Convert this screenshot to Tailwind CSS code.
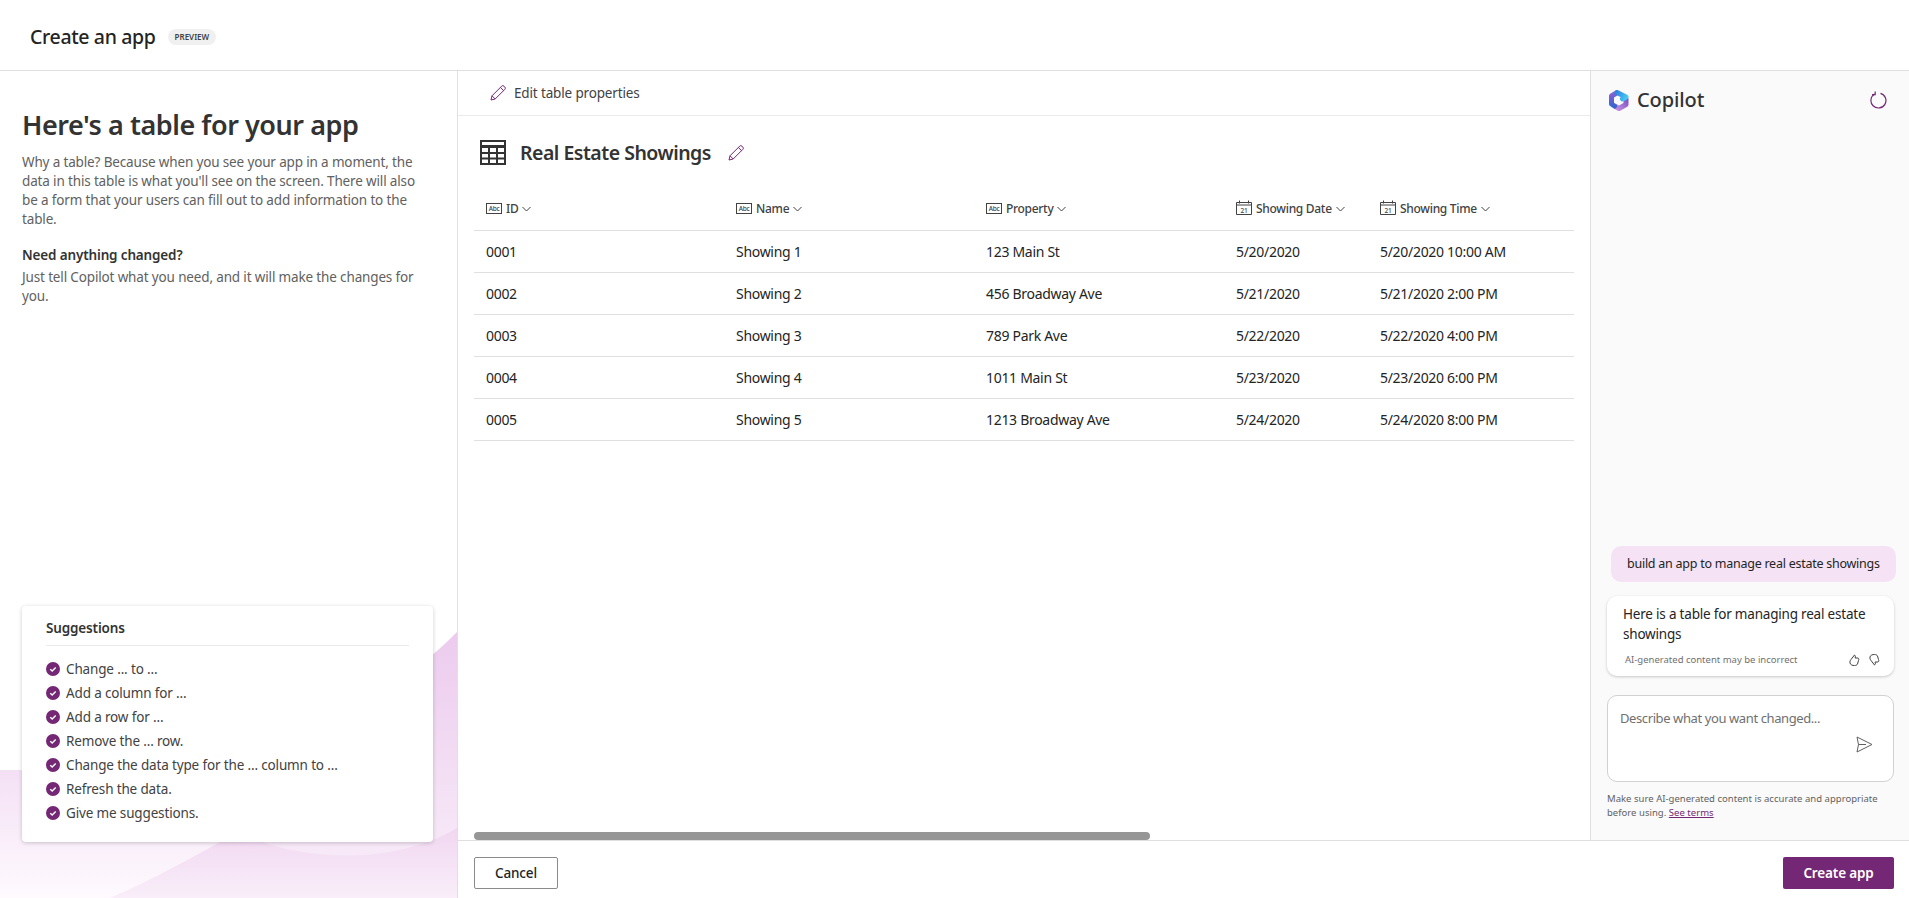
<!DOCTYPE html>
<html lang="en">
<head>
    <meta charset="UTF-8">
    <title>Create an app</title>
    <script src="https://cdn.jsdelivr.net/npm/@tailwindcss/browser@4"></script>
</head>
<body class="bg-white font-['Noto_Sans',sans-serif] text-[#242424] h-[898px] overflow-hidden">
    <!-- Header -->
    <header class="h-[71px] border-b border-[#e0e0e0] flex items-center pl-[30px] pt-[3px]">
        <h1 class="text-[19.5px] font-medium tracking-[-0.35px]">Create an app</h1>
        <span class="ml-[12px] h-[16px] px-[7px] rounded-full bg-[#f0f0f0] text-[8px] font-semibold text-[#424242] flex items-center">PREVIEW</span>
    </header>

    <div class="flex h-[827px]">
        <!-- Left panel -->
        <aside class="relative w-[458px] shrink-0 border-r border-[#e0e0e0] overflow-hidden">
            <svg class="absolute left-0 top-0" width="457" height="827" viewBox="0 71 457 827">
                <defs>
                    <linearGradient id="waveA" x1="0" y1="0" x2="0" y2="1">
                        <stop offset="0" stop-color="#eccbee"/>
                        <stop offset="1" stop-color="#f9eff9"/>
                    </linearGradient>
                    <linearGradient id="waveB" x1="0" y1="0" x2="0" y2="1">
                        <stop offset="0" stop-color="#f4e0f5"/>
                        <stop offset="1" stop-color="#fefafe"/>
                    </linearGradient>
                    <linearGradient id="waveC" x1="0" y1="0" x2="0" y2="1">
                        <stop offset="0" stop-color="#f1d7f1"/>
                        <stop offset="1" stop-color="#f9eef9"/>
                    </linearGradient>
                </defs>
                <path d="M0 770 H120 C250 770 380 710 457 632 V898 H0 Z" fill="url(#waveA)"/>
                <path d="M240 832 C290 860 390 868 457 828 V898 H110 Z" fill="url(#waveC)"/>
                <path d="M0 770 H40 C130 770 140 830 220 842 C170 870 140 885 110 898 H0 Z" fill="url(#waveB)"/>
            </svg>

            <div class="relative h-full flex flex-col justify-between pl-[22px] pr-[24px] pb-[56px]">
                <div>
                    <h2 class="mt-[36px] text-[27px] leading-[36px] font-semibold tracking-[-0.45px] text-[#333]">Here's a table for your app</h2>
                    <p class="mt-[10px] text-[13.5px] leading-[19px] text-[#616161] tracking-[-0.15px]">Why a table? Because when you see your app in a moment, the data in this table is what you'll see on the screen. There will also be a form that your users can fill out to add information to the table.</p>
                    <p class="mt-[17px] text-[13.5px] leading-[19px] font-semibold text-[#333] tracking-[-0.15px]">Need anything changed?</p>
                    <p class="mt-[3px] text-[13.5px] leading-[19px] text-[#616161] tracking-[-0.15px]">Just tell Copilot what you need, and it will make the changes for you.</p>
                </div>

                <!-- Suggestions -->
                <div class="w-[411px] h-[236px] bg-white rounded-[4px] shadow-[0_1px_4px_rgba(0,0,0,0.2)] px-[24px] pt-[12px]">
                    <div class="h-[28px] border-b border-[#ebebeb] text-[13.5px] font-semibold text-[#333] tracking-[-0.15px]">Suggestions</div>
                    <ul class="mt-[11px] text-[13.5px] leading-[24px] text-[#424242] tracking-[-0.15px]">
                        <li class="flex items-center gap-[6px] h-[24px]"><svg width="14" height="14" viewBox="0 0 14 14"><circle cx="7" cy="7" r="7" fill="#742774"/><path d="M4.3 7.2l1.9 1.8 3.5-3.6" fill="none" stroke="#fff" stroke-width="1.4"/></svg>Change ... to ...</li>
                        <li class="flex items-center gap-[6px] h-[24px]"><svg width="14" height="14" viewBox="0 0 14 14"><circle cx="7" cy="7" r="7" fill="#742774"/><path d="M4.3 7.2l1.9 1.8 3.5-3.6" fill="none" stroke="#fff" stroke-width="1.4"/></svg>Add a column for ...</li>
                        <li class="flex items-center gap-[6px] h-[24px]"><svg width="14" height="14" viewBox="0 0 14 14"><circle cx="7" cy="7" r="7" fill="#742774"/><path d="M4.3 7.2l1.9 1.8 3.5-3.6" fill="none" stroke="#fff" stroke-width="1.4"/></svg>Add a row for ...</li>
                        <li class="flex items-center gap-[6px] h-[24px]"><svg width="14" height="14" viewBox="0 0 14 14"><circle cx="7" cy="7" r="7" fill="#742774"/><path d="M4.3 7.2l1.9 1.8 3.5-3.6" fill="none" stroke="#fff" stroke-width="1.4"/></svg>Remove the ... row.</li>
                        <li class="flex items-center gap-[6px] h-[24px]"><svg width="14" height="14" viewBox="0 0 14 14"><circle cx="7" cy="7" r="7" fill="#742774"/><path d="M4.3 7.2l1.9 1.8 3.5-3.6" fill="none" stroke="#fff" stroke-width="1.4"/></svg>Change the data type for the ... column to ...</li>
                        <li class="flex items-center gap-[6px] h-[24px]"><svg width="14" height="14" viewBox="0 0 14 14"><circle cx="7" cy="7" r="7" fill="#742774"/><path d="M4.3 7.2l1.9 1.8 3.5-3.6" fill="none" stroke="#fff" stroke-width="1.4"/></svg>Refresh the data.</li>
                        <li class="flex items-center gap-[6px] h-[24px]"><svg width="14" height="14" viewBox="0 0 14 14"><circle cx="7" cy="7" r="7" fill="#742774"/><path d="M4.3 7.2l1.9 1.8 3.5-3.6" fill="none" stroke="#fff" stroke-width="1.4"/></svg>Give me suggestions.</li>
                    </ul>
                </div>
            </div>
        </aside>

        <!-- Center + right -->
        <div class="flex-1 flex flex-col min-w-0">
            <div class="flex h-[769px]">
                <main class="w-[1132px] shrink-0 flex flex-col">
                    <div class="h-[45px] border-b border-[#ebebeb] flex items-center pl-[32px] gap-[8px] text-[13.5px] text-[#424242] tracking-[-0.15px]">
                        <svg width="16" height="16" viewBox="0 0 16 16" fill="none" stroke="#742774" stroke-width="1"><path d="M1 15l1-4.2L11.6 1.2a1.7 1.7 0 0 1 2.4 0l.8.8a1.7 1.7 0 0 1 0 2.4L5.200 14z"/><path d="M10.400 2.500l3.200 3.200M2 10.800l3.200 3.200"/></svg>
                        Edit table properties
                    </div>

                    <div class="pl-[16px] pr-[15px] flex-1 flex flex-col">
                        <div class="h-[73px] flex items-center pl-[6px]">
                            <svg width="26" height="25" viewBox="0 0 26 25" fill="none" stroke="#333" stroke-width="2"><rect x="1" y="1" width="24" height="23"/><path d="M1 6.500h24" stroke-width="3"/><path d="M1 13h24M1 18.500h24M9 6v18M17 6v18"/></svg>
                            <span class="ml-[14px] text-[19.5px] font-semibold text-[#333] tracking-[-0.5px]">Real Estate Showings</span>
                            <svg class="ml-[17px]" width="16" height="16" viewBox="0 0 16 16" fill="none" stroke="#742774" stroke-width="1"><path d="M1 15l1-4.2L11.6 1.2a1.7 1.7 0 0 1 2.4 0l.8.8a1.7 1.7 0 0 1 0 2.4L5.200 14z"/><path d="M10.400 2.500l3.200 3.200M2 10.800l3.200 3.200"/></svg>
                        </div>

                        <table class="w-[1100px] table-fixed text-[14px] text-[#242424] tracking-[-0.3px]">
                            <colgroup>
                                <col class="w-[250px]"><col class="w-[250px]"><col class="w-[250px]"><col class="w-[144px]"><col>
                            </colgroup>
                            <thead>
                                <tr class="h-[41px] border-b border-[#e0e0e0] text-left text-[12px] text-[#424242] tracking-[-0.3px]">
                                    <th class="pl-[12px] font-medium"><span class="flex items-center"><svg class="mb-[2px] mr-[4px]" width="16" height="11" viewBox="0 0 16 11"><rect x=".5" y=".5" width="15" height="10" fill="none" stroke="#424242"/><text x="8" y="7.800" font-size="6.500" text-anchor="middle" fill="#424242">Abc</text></svg>ID<svg class="ml-[4px]" width="9" height="6" viewBox="0 0 9 6" fill="none" stroke="#424242"><path d="M.5 1l4 4 4-4"/></svg></span></th>
                                    <th class="pl-[12px] font-medium"><span class="flex items-center"><svg class="mb-[2px] mr-[4px]" width="16" height="11" viewBox="0 0 16 11"><rect x=".5" y=".5" width="15" height="10" fill="none" stroke="#424242"/><text x="8" y="7.800" font-size="6.500" text-anchor="middle" fill="#424242">Abc</text></svg>Name<svg class="ml-[4px]" width="9" height="6" viewBox="0 0 9 6" fill="none" stroke="#424242"><path d="M.5 1l4 4 4-4"/></svg></span></th>
                                    <th class="pl-[12px] font-medium"><span class="flex items-center"><svg class="mb-[2px] mr-[4px]" width="16" height="11" viewBox="0 0 16 11"><rect x=".5" y=".5" width="15" height="10" fill="none" stroke="#424242"/><text x="8" y="7.800" font-size="6.500" text-anchor="middle" fill="#424242">Abc</text></svg>Property<svg class="ml-[4px]" width="9" height="6" viewBox="0 0 9 6" fill="none" stroke="#424242"><path d="M.5 1l4 4 4-4"/></svg></span></th>
                                    <th class="pl-[12px] font-medium"><span class="flex items-center"><svg class="mb-[3px] mr-[4px]" width="16" height="15" viewBox="0 0 16 15"><path d="M.5 2.500h15v12H.5zM.5 5h15M3.500 .5v3M12.500 .5v3" fill="none" stroke="#424242"/><text x="8" y="12.500" font-size="6.500" text-anchor="middle" fill="#424242">21</text></svg>Showing Date<svg class="ml-[4px]" width="9" height="6" viewBox="0 0 9 6" fill="none" stroke="#424242"><path d="M.5 1l4 4 4-4"/></svg></span></th>
                                    <th class="pl-[12px] font-medium"><span class="flex items-center"><svg class="mb-[3px] mr-[4px]" width="16" height="15" viewBox="0 0 16 15"><path d="M.5 2.500h15v12H.5zM.5 5h15M3.500 .5v3M12.500 .5v3" fill="none" stroke="#424242"/><text x="8" y="12.500" font-size="6.500" text-anchor="middle" fill="#424242">21</text></svg>Showing Time<svg class="ml-[4px]" width="9" height="6" viewBox="0 0 9 6" fill="none" stroke="#424242"><path d="M.5 1l4 4 4-4"/></svg></span></th>
                                </tr>
                            </thead>
                            <tbody class="[&>tr]:h-[42.2px] [&>tr]:border-b [&>tr]:border-[#e0e0e0] [&_td]:pl-[12px]">
                                <tr><td>0001</td><td>Showing 1</td><td>123 Main St</td><td>5/20/2020</td><td>5/20/2020 10:00 AM</td></tr>
                                <tr><td>0002</td><td>Showing 2</td><td>456 Broadway Ave</td><td>5/21/2020</td><td>5/21/2020 2:00 PM</td></tr>
                                <tr><td>0003</td><td>Showing 3</td><td>789 Park Ave</td><td>5/22/2020</td><td>5/22/2020 4:00 PM</td></tr>
                                <tr><td>0004</td><td>Showing 4</td><td>1011 Main St</td><td>5/23/2020</td><td>5/23/2020 6:00 PM</td></tr>
                                <tr><td>0005</td><td>Showing 5</td><td>1213 Broadway Ave</td><td>5/24/2020</td><td>5/24/2020 8:00 PM</td></tr>
                            </tbody>
                        </table>

                        <div class="mt-auto h-[8px] w-[676px] rounded-full bg-[#969696]"></div>
                    </div>
                </main>

                <!-- Copilot -->
                <section class="flex-1 bg-[#fafafa] border-l border-[#e0e0e0] flex flex-col pl-[16px] pr-[15px]">
                    <div class="h-[56px] flex items-center justify-between pt-[1px]">
                        <div class="flex items-center gap-[7px] ml-[1px]">
                            <svg width="22" height="22" viewBox="0 0 22 22" fill="none" stroke-width="5" stroke-linejoin="round" stroke-linecap="round">
                                <defs>
                                    <linearGradient id="copA" gradientUnits="userSpaceOnUse" x1="5" y1="3" x2="7" y2="19"><stop offset="0" stop-color="#8a62d2"/><stop offset="1" stop-color="#2e66cf"/></linearGradient>
                                    <linearGradient id="copB" gradientUnits="userSpaceOnUse" x1="8" y1="4" x2="19" y2="10"><stop offset="0" stop-color="#2f86e0"/><stop offset="1" stop-color="#46cdf5"/></linearGradient>
                                    <linearGradient id="copC" gradientUnits="userSpaceOnUse" x1="18" y1="9" x2="8" y2="19"><stop offset="0" stop-color="#7d55c8"/><stop offset="1" stop-color="#c08ade"/></linearGradient>
                                </defs>
                                <path d="M18 10v5.500L11 19.500 7.500 17.500" stroke="url(#copC)"/>
                                <path d="M8.500 4L3.500 7v8l3 2" stroke="url(#copA)"/>
                                <path d="M9 3.500L18 8l-3.500 2" stroke="url(#copB)"/>
                            </svg>
                            <span class="text-[20px] font-medium text-[#333] tracking-[-0.1px]">Copilot</span>
                        </div>
                        <svg class="mr-[9px] mt-[1px]" width="17" height="18" viewBox="0 0 17 18" fill="none" stroke="#742774" stroke-width="1.200"><path d="M4.700 3A7.500 7.500 0 1 0 10.500 2.300"/><path d="M5.200 .6v3H2"/></svg>
                    </div>

                    <div class="mt-auto flex flex-col">
                        <div class="ml-[4px] w-[285px] h-[36px] rounded-[10px] bg-[#f5e3f5] text-[12.500px] text-[#242424] flex items-center pl-[16px] tracking-[-0.25px] whitespace-nowrap">build an app to manage real estate showings</div>
                        <div class="mt-[14px] w-[287px] h-[80px] rounded-[10px] bg-white shadow-[0_1px_3px_rgba(0,0,0,0.2)] pl-[16px] pr-[14px] pt-[8px]">
                            <p class="text-[13.5px] leading-[20px] text-[#242424] tracking-[-0.2px]">Here is a table for managing real estate showings</p>
                            <div class="mt-[9px] flex items-center justify-between">
                                <span class="ml-[2px] text-[9.500px] text-[#707070]">AI-generated content may be incorrect</span>
                                <span class="flex gap-[8px]">
                                    <svg width="12" height="12" viewBox="0 0 12 12" fill="none" stroke="#424242"><path d="M3 5.500L6.500 1c1 .5 1 1.500.6 3H10c1 .5 1 1.500.500 2.500l-1 3.500c-.5 1-1.500 1.500-3 1.500-2 0-4-.5-4.500-2.500-.3-1.500.2-2.500 1-3.500z"/></svg>
                                    <svg width="12" height="12" viewBox="0 0 12 12" fill="none" stroke="#424242"><path d="M3 6.500L6.500 11c1-.5 1-1.500.6-3H10c1-.5 1-1.500.500-2.500L9.500 2C9 1 8 .5 6.500.5c-2 0-4 .5-4.500 2.500-.3 1.500.2 2.500 1 3.500z"/></svg>
                                </span>
                            </div>
                        </div>
                        <div class="mt-[19px] relative w-[287px] h-[87px] rounded-[10px] bg-white border border-[#d1d1d1] pl-[12px] pt-[13px] text-[13px] text-[#707070] tracking-[-0.4px]">
                            Describe what you want changed...
                            <svg class="absolute right-[20px] bottom-[28px]" width="17" height="17" viewBox="0 0 17 17" fill="none" stroke="#616161"><path d="M1 1l15 7.500L1 16l1.500-7.500zM2.500 8.500H10"/></svg>
                        </div>
                        <p class="mt-[10px] mb-[20px] text-[9.500px] leading-[14px] text-[#616161] tracking-[0.03px]">Make sure AI-generated content is accurate and appropriate before using. <a class="text-[#742774] underline" href="#">See terms</a></p>
                    </div>
                </section>
            </div>

            <!-- Footer -->
            <footer class="h-[58px] border-t border-[#e0e0e0] flex items-start justify-between pt-[16px] pl-[16px] pr-[15px]">
                <button class="w-[84px] h-[32px] rounded-[2px] border border-[#8a8a8a] bg-white text-[13.5px] font-medium text-[#242424] tracking-[-0.15px]">Cancel</button>
                <button class="w-[111px] h-[32px] rounded-[2px] bg-[#742774] text-[13.5px] font-semibold text-white tracking-[-0.15px]">Create app</button>
            </footer>
        </div>
    </div>
</body>
</html>
